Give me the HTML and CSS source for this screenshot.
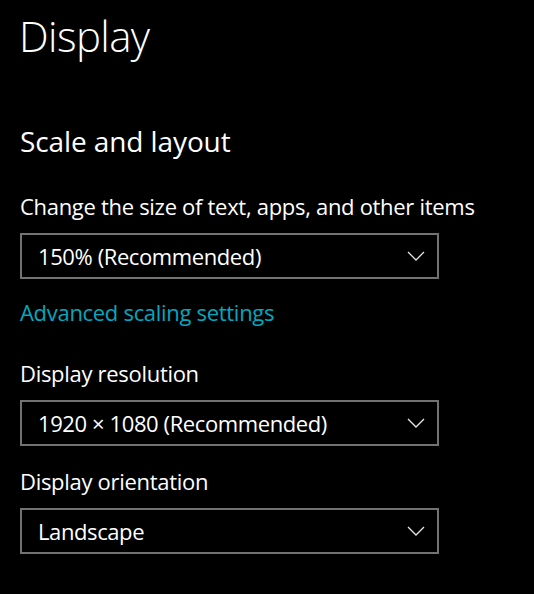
FILE: index.html
```html
<!DOCTYPE html>
<html lang="en">
<head>
<meta charset="utf-8">
<title>Display</title>
<link rel="stylesheet" href="styles.css">
</head>
<body>
<main class="page">
  <h1 class="title">Display</h1>
  <h2 class="section">Scale and layout</h2>

  <div class="label label-first">Change the size of text, apps, and other items</div>
  <div class="select">
    <span class="select-text">150% (Recommended)</span>
    <svg class="chevron" width="18" height="10" viewBox="0 0 18 10"><path d="M1 1 L9 9 L17 1" fill="none" stroke="#e6e6e6" stroke-width="1.3"/></svg>
  </div>

  <a class="link" href="#">Advanced scaling settings</a>

  <div class="label label-after-link">Display resolution</div>
  <div class="select">
    <span class="select-text">1920 × 1080 (Recommended)</span>
    <svg class="chevron" width="18" height="10" viewBox="0 0 18 10"><path d="M1 1 L9 9 L17 1" fill="none" stroke="#e6e6e6" stroke-width="1.3"/></svg>
  </div>

  <div class="label label-after-select">Display orientation</div>
  <div class="select">
    <span class="select-text">Landscape</span>
    <svg class="chevron" width="18" height="10" viewBox="0 0 18 10"><path d="M1 1 L9 9 L17 1" fill="none" stroke="#e6e6e6" stroke-width="1.3"/></svg>
  </div>
</main>
</body>
</html>
```

FILE: styles.css
```css
html, body {
  margin: 0;
  padding: 0;
  background: #000;
}

body {
  font-family: "Open Sans", "Noto Sans", sans-serif;
  color: #fff;
  width: 534px;
  height: 594px;
  overflow: hidden;
}

.page {
  display: flex;
  flex-direction: column;
  align-items: flex-start;
  padding: 6px 0 0 20px;
}

.title {
  margin: 0;
  margin-left: -1px;
  font-size: 42px;
  font-weight: 300;
  letter-spacing: -0.6px;
  line-height: 60px;
}

.section {
  margin: 55px 0 0;
  font-size: 28px;
  font-weight: 400;
  letter-spacing: -0.1px;
  line-height: 40px;
}

.label {
  font-size: 22px;
  letter-spacing: -0.3px;
  line-height: 30px;
}

.label-first { margin-top: 30px; }
.label-after-link { margin-top: 31px; }
.label-after-select { margin-top: 20px; }

.select {
  box-sizing: border-box;
  margin-top: 12px;
  width: 419px;
  height: 46px;
  border: 2px solid #727272;
  display: flex;
  align-items: center;
  justify-content: space-between;
  padding: 0 12px 0 16px;
}

.select-text {
  font-size: 22px;
  letter-spacing: -0.4px;
  line-height: 42px;
}

.chevron {
  display: block;
}

.link {
  margin-top: 18px;
  font-size: 22px;
  letter-spacing: -0.3px;
  line-height: 30px;
  color: #00a9bf;
  text-decoration: none;
}
```
